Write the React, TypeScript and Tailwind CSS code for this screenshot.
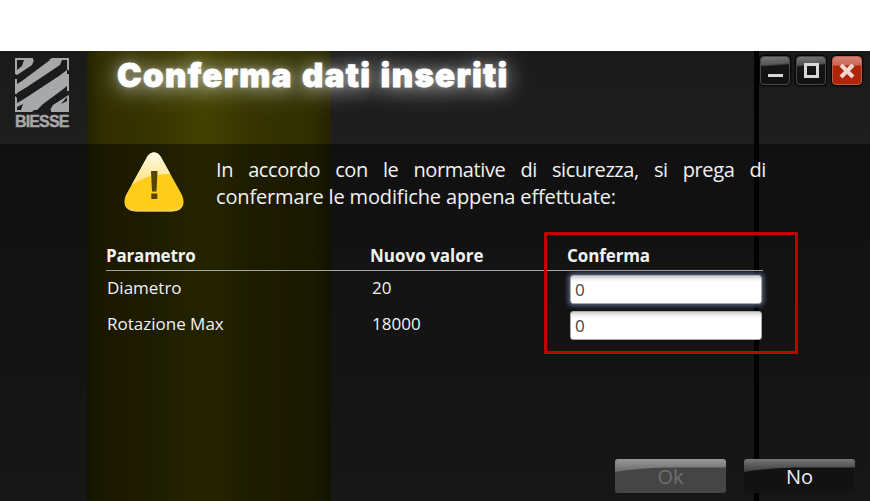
import type { ReactNode } from "react";

const windowBg =
  "bg-[linear-gradient(90deg,transparent_754px,#000_754px,#000_759px,transparent_759px),linear-gradient(90deg,transparent_87px,#252300_87px,#302e00_101px,#353300_145px,#424100_205px,#353300_255px,#302f00_310px,#242200_331px,transparent_331px),linear-gradient(180deg,#1a1a1a,#1e1e1e_93px,#212121_150px,#2a2a2a)]";

function Logo() {
  return (
    <div className="ml-[15px] mt-[7px] w-[54px] text-[#a7a8aa]">
      <svg width="54" height="54" viewBox="0 0 54 54" className="block">
        <rect width="54" height="54" fill="#a7a8aa" />
        <g fill="#1b1b1b">
          <path d="M2 2H9L7 8L2 12Z" />
          <path d="M19 2H35L7 23L2 26V17L17 7Z" />
          <path d="M47 2H52V12L44 18L9 41L2 45V35L12 29L45 7Z" />
          <path d="M52 28V38L38 47L35 52H22L28 46L47 32Z" />
          <path d="M2 49L8 46L6 52H2Z" />
          <path d="M52 42V46L46 49Z" transform="translate(0 -3)" />
          <path d="M18 0H37L34 2H18ZM0 16L2 17V21H0ZM52 11L54 13V16H52ZM0 36H2V40L0 38ZM52 33H54V37L52 38ZM19 52H36V54H17Z" />
        </g>
      </svg>
      <div className="mt-[3px] whitespace-nowrap font-['Liberation_Sans',sans-serif] text-[16px] font-bold leading-[13px] tracking-[-0.850px] [-webkit-text-stroke:0.4px_#a7a8aa]">
        BIESSE
      </div>
    </div>
  );
}

function WindowButton({ red, children }: { red?: boolean; children: ReactNode }) {
  return (
    <div
      className={
        "flex h-[29px] w-[30px] items-center justify-center rounded-[4px] border shadow-[0_0_2px_1px_#000] " +
        (red
          ? "border-[#b5614f] bg-[linear-gradient(180deg,#d98373,#cb6855_8px,#ae2409_9px,#b22404)]"
          : "border-[#484848] bg-[linear-gradient(176deg,#777,#555_8px,#151515_10px,#111)]")
      }
    >
      {children}
    </div>
  );
}

function Warning() {
  return (
    <svg width="62" height="63" viewBox="0 0 62 63" className="block">
      <defs>
        <linearGradient id="shine" x1="0" y1="0" x2="0" y2="1">
          <stop offset="0" stopColor="#fffdf2" />
          <stop offset="1" stopColor="#ffdc62" />
        </linearGradient>
        <clipPath id="triangle">
          <path d="M31 1.5C35 1.5 37 4 39 8L59 44C63 54 59 60 49 60.500H13C3 60 -1 54 3 44L23 8C25 4 27 1.500 31 1.500Z" />
        </clipPath>
      </defs>
      <g clipPath="url(#triangle)">
        <rect width="62" height="63" fill="#ffce1d" />
        <path d="M0 0H62V24Q48 22 32 24Q17 27 0 40Z" fill="url(#shine)" />
        <path d="M5 57Q9 60 16 60H46Q55 60 58 56" fill="none" stroke="#f1d36b" strokeWidth="1.500" />
      </g>
      <path d="M28 20H34.500L33.500 40.500H29ZM28.300 42.500H34.300V48H28.300Z" fill="#554508" />
    </svg>
  );
}

function ValueField({ focused }: { focused?: boolean }) {
  return (
    <div
      className={
        "h-[29px] w-[192px] rounded-[3px] border border-[#aaa] bg-[linear-gradient(180deg,#cfcdcd,#ededed_3px,#fff_6px)] pl-[4px] font-['Open_Sans','Noto_Sans',sans-serif] text-[17px] leading-[28px] text-[#444] " +
        (focused ? "shadow-[0_0_4px_2px_#56607d]" : "")
      }
    >
      0
    </div>
  );
}

function ActionButton({ label, disabled }: { label: string; disabled?: boolean }) {
  return (
    <div
      className={
        "relative flex h-[34px] w-[111px] justify-center overflow-hidden rounded-[3px] pt-[4px] text-[20px] leading-[28px] " +
        (disabled ? "bg-[#454545] text-[#6f6f6f]" : "bg-[#121212] text-[#eee]")
      }
    >
      <svg className="absolute left-0 top-0" width="111" height="14" viewBox="0 0 111 14">
        <defs>
          <linearGradient id={"gloss" + label} x1="0" y1="0" x2="0" y2="1">
            <stop offset="0" stopColor={disabled ? "#989898" : "#777"} />
            <stop offset="1" stopColor={disabled ? "#6b6b6b" : "#3b3b3b"} />
          </linearGradient>
        </defs>
        <path d="M0 0H111V8.500H50Q22 9 0 13Z" fill={"url(#gloss" + label + ")"} />
      </svg>
      <span className="relative">{label}</span>
    </div>
  );
}

export default function App() {
  return (
    <div className="h-[501px] w-[870px] overflow-hidden bg-white pt-[51px] font-['Open_Sans','Noto_Sans',sans-serif] text-[#f2f2f2]">
      <div className={"flex h-[450px] flex-col " + windowBg}>
        <header className="flex h-[93px] shrink-0">
          <Logo />
          <h1 className="ml-[48px] mt-[4px] w-[500px] whitespace-nowrap font-['Inter',sans-serif] text-[33px] font-black leading-[40px] tracking-[1.300px] text-white [word-spacing:1.500px] [-webkit-text-stroke:0.8px_#fff] [text-shadow:0_0_5px_#ffffff50,0_2px_18px_#ffffff90,0_2px_30px_#ffffff80]">
            Conferma dati inseriti
          </h1>
          <div className="ml-auto mr-[8px] mt-[5px] flex gap-[6px]">
            <WindowButton>
              <span className="mt-[10px] h-[3px] w-[15px] bg-[#d8d8d8]" />
            </WindowButton>
            <WindowButton>
              <span className="h-[15px] w-[15px] border-[3px] border-[#d8d8d8]" />
            </WindowButton>
            <WindowButton red>
              <svg width="16" height="16" viewBox="0 0 16 16">
                <path d="M2 2L14 14M14 2L2 14" stroke="#f2d5cf" strokeWidth="4.200" />
              </svg>
            </WindowButton>
          </div>
        </header>

        <main className="flex flex-1 flex-col bg-black/45">
          <section className="flex pl-[123px] pt-[7px]">
            <Warning />
            <div className="ml-[31px] mt-[6px] text-[20px] leading-[26.500px]">
              <p className="flex w-[550px] justify-between tracking-[-0.400px]">
                {"In accordo con le normative di sicurezza, si prega di".split(" ").map((word, i) => (
                  <span key={i}>{word}</span>
                ))}
              </p>
              <p className="whitespace-nowrap tracking-[-0.150px]">confermare le modifiche appena effettuate:</p>
            </div>
          </section>

          <section className="relative ml-[106px] mt-[29px] w-[657px]">
            <div className="grid h-[28px] grid-cols-[264px_197px_1fr] border-b border-[#a5a5a5] text-[17px] font-bold leading-[26px]">
              <span className="tracking-[-0.200px]">Parametro</span>
              <span>Nuovo valore</span>
              <span className="tracking-[-0.100px]">Conferma</span>
            </div>
            <div className="grid h-[36px] grid-cols-[265px_198px_1fr] pl-px pt-[4px] text-[17px] leading-[25px]">
              <span>Diametro</span>
              <span>20</span>
              <ValueField focused />
            </div>
            <div className="grid h-[36px] grid-cols-[265px_198px_1fr] pl-px pt-[4px] text-[17px] leading-[25px]">
              <span>Rotazione Max</span>
              <span>18000</span>
              <ValueField />
            </div>
            <div className="absolute left-[438px] top-[-11px] h-[122px] w-[254px] border-[3px] border-[#c00000]" />
          </section>

          <footer className="ml-auto mr-[15px] mt-auto mb-[8px] flex gap-[18px]">
            <ActionButton label="Ok" disabled />
            <ActionButton label="No" />
          </footer>
        </main>
      </div>
    </div>
  );
}
